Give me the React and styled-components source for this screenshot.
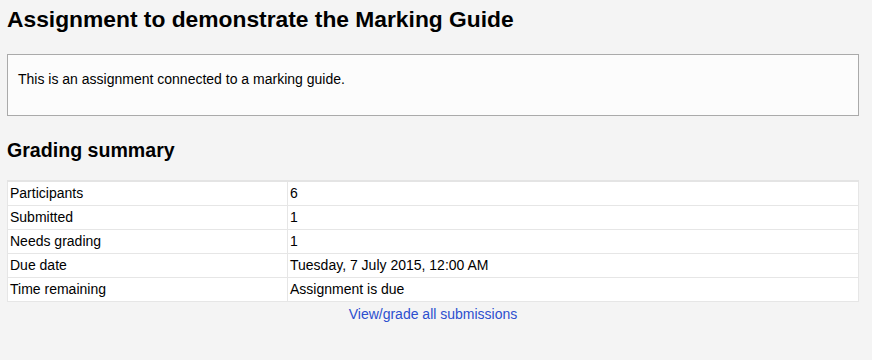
import styled, { createGlobalStyle } from "styled-components"

const GlobalStyle = createGlobalStyle`
    body {
        margin: 0;
        background: #f4f4f4;
        font-family: "Liberation Sans", Arial, sans-serif;
        color: #000;
    }
`

const Page = styled.div`
    padding: 0 13px 0 7px;
`

const Title = styled.h2`
    margin: 0;
    padding-top: 6px;
    font-size: 22.8px;
    line-height: 27px;
    font-weight: bold;
`

const IntroBox = styled.div`
    margin-top: 21px;
    height: 62px;
    box-sizing: border-box;
    border: 1px solid #aaa;
    background: #fcfcfc;
    padding: 15px 10px;
    font-size: 14px;
    line-height: 18px;
`

const Heading = styled.h3`
    margin: 22px 0 0;
    font-size: 19.6px;
    line-height: 24px;
    font-weight: bold;
`

const Table = styled.table`
    width: 100%;
    margin-top: 18px;
    border-collapse: collapse;
    border-top: 2px solid #e4e4e4;
    background: #fff;
    font-size: 14px;
`

const Cell = styled.td`
    border: 1px solid #e6e6e6;
    padding: 0 2px;
    height: 23px;
    line-height: 23px;
    width: ${(p) => (p.$label ? "275px" : "auto")};
`

const LinkRow = styled.div`
    text-align: center;
    margin-top: 3px;
    font-size: 14px;
    line-height: 18px;
`

const Link = styled.a`
    color: #2c4fcf;
    text-decoration: none;
`

const rows = [
    ["Participants", "6"],
    ["Submitted", "1"],
    ["Needs grading", "1"],
    ["Due date", "Tuesday, 7 July 2015, 12:00 AM"],
    ["Time remaining", "Assignment is due"],
]

const App = () => {
    return (
        <>
            <GlobalStyle />
            <Page>
                <Title>Assignment to demonstrate the Marking Guide</Title>
                <IntroBox>This is an assignment connected to a marking guide.</IntroBox>
                <Heading>Grading summary</Heading>
                <Table>
                    <tbody>
                        {rows.map(([label, value]) => (
                            <tr key={label}>
                                <Cell $label>{label}</Cell>
                                <Cell>{value}</Cell>
                            </tr>
                        ))}
                    </tbody>
                </Table>
                <LinkRow>
                    <Link href="#">View/grade all submissions</Link>
                </LinkRow>
            </Page>
        </>
    )
}

export default App
